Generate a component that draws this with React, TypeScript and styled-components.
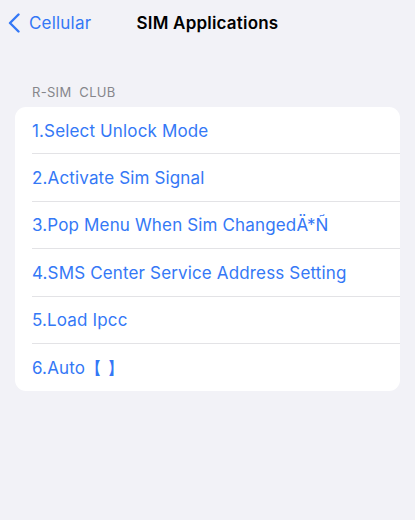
import styled, { createGlobalStyle } from "styled-components";

const GlobalStyle = createGlobalStyle`
  html, body {
    margin: 0;
    padding: 0;
    background: #f2f2f7;
    font-family: "Inter", "Liberation Sans", Arial, sans-serif;
  }
`;

const Page = styled.div`
  width: 415px;
  height: 520px;
  background: #f2f2f7;
  display: flex;
  flex-direction: column;
`;

const NavBar = styled.div`
  height: 46px;
  display: grid;
  grid-template-columns: 1fr auto 1fr;
  align-items: center;
  padding: 0 8px;
`;

const BackButton = styled.div`
  display: flex;
  align-items: center;
  gap: 9px;
  color: #3478f6;
  font-size: 17px;
  letter-spacing: 0.2px;
`;

const Title = styled.div`
  font-size: 17px;
  font-weight: 600;
  color: #000;
  letter-spacing: 0.2px;
`;

const SectionHeader = styled.div`
  margin: 38px 0 0 32px;
  font-size: 13px;
  color: #86868b;
  letter-spacing: 0.3px;
  white-space: pre;
`;

const Card = styled.div`
  margin: 7px 15px 0 15px;
  background: #fff;
  border-radius: 11px;
  overflow: hidden;
`;

const Row = styled.div<{ $last?: boolean }>`
  height: 47.4px;
  margin-left: 17px;
  padding-top: 1px;
  display: flex;
  align-items: center;
  box-sizing: border-box;
  border-bottom: ${(p) => (p.$last ? "none" : "1px solid #e3e3e6")};
  color: #3478f6;
  font-size: 17px;
  letter-spacing: 0.15px;
`;

const items = [
  "1.Select Unlock Mode",
  "2.Activate Sim Signal",
  "3.Pop Menu When Sim ChangedÄ*Ñ",
  "4.SMS Center Service Address Setting",
  "5.Load Ipcc",
  "6.Auto【 】",
];

export default function App() {
  return (
    <Page>
      <GlobalStyle />
      <NavBar>
        <BackButton>
          <svg width="12" height="20" viewBox="0 0 12 20">
            <path
              d="M10.5 1.5 L2 10 L10.5 18.5"
              fill="none"
              stroke="#3478f6"
              strokeWidth="2.4"
              strokeLinecap="round"
              strokeLinejoin="round"
            />
          </svg>
          Cellular
        </BackButton>
        <Title>SIM Applications</Title>
        <div />
      </NavBar>
      <SectionHeader>R-SIM  CLUB</SectionHeader>
      <Card>
        {items.map((t, i) => (
          <Row key={i} $last={i === items.length - 1}>
            {t}
          </Row>
        ))}
      </Card>
    </Page>
  );
}
